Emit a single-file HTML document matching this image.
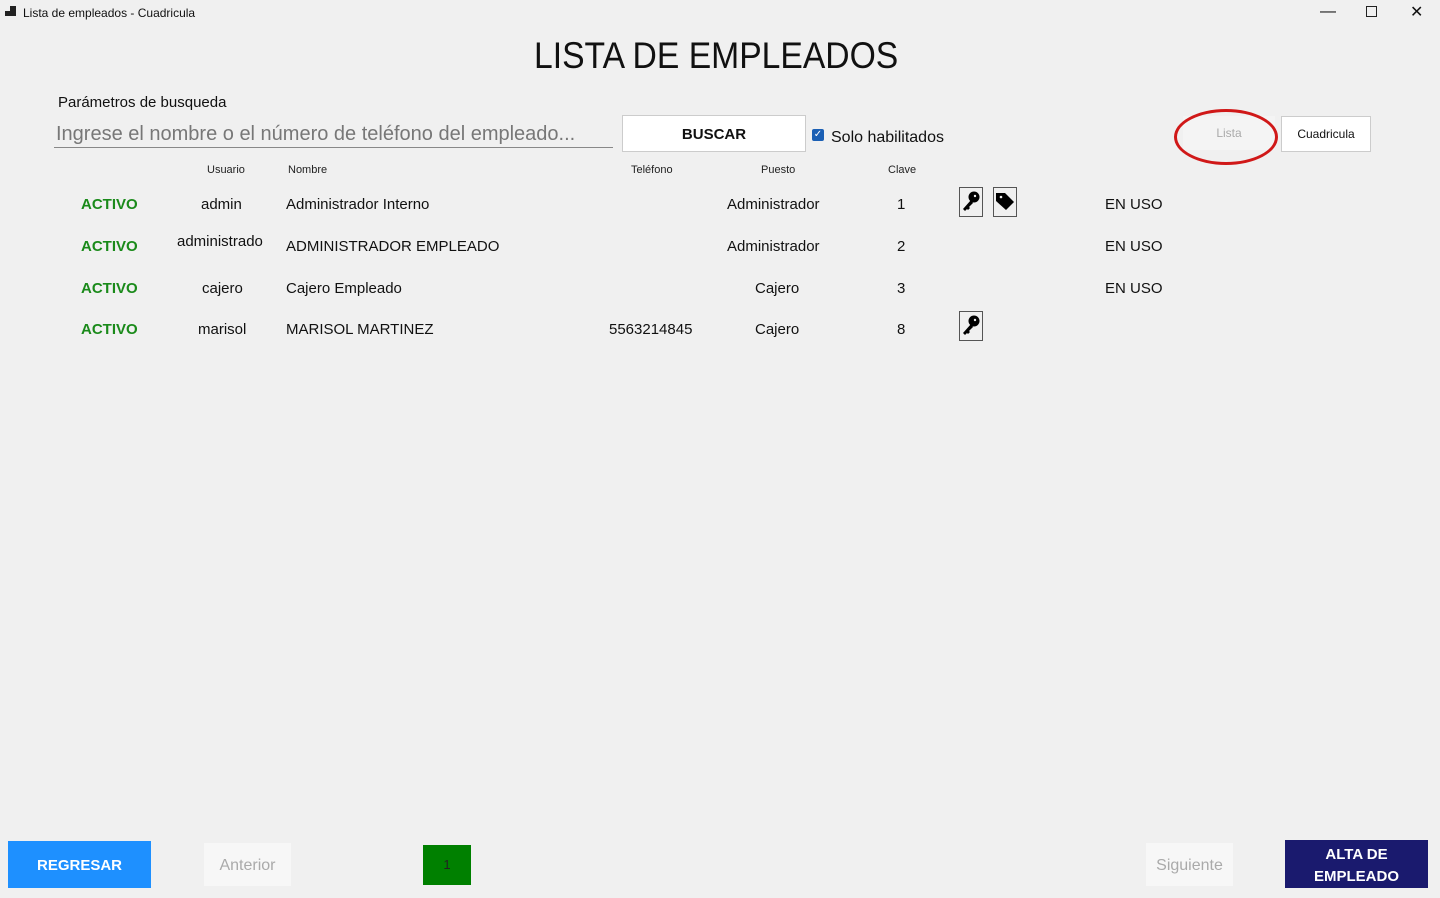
<!DOCTYPE html>
<html><head><meta charset="utf-8"><style>
body{margin:0;width:1440px;height:898px;background:#f0f0f0;font-family:"Liberation Sans",sans-serif;position:relative;overflow:hidden;color:#111}
.a{position:absolute;white-space:nowrap}
.h{font-size:11px;color:#222}
.r{font-size:15px}
.act{color:#1a8a1a;font-weight:bold;font-size:15px}
.ico{position:absolute;width:22px;height:28px;border:1px solid #555;background:#f0f0f0}
</style></head><body>
<svg class="a" style="left:5px;top:6px" width="12" height="12"><rect x="0" y="5" width="5" height="5" fill="#222"/><rect x="5" y="0" width="6" height="10" fill="#222"/></svg>
<div class="a" style="left:23px;top:6px;font-size:12px">Lista de empleados - Cuadricula</div>
<div class="a" style="left:1320px;top:3px;font-size:16px">—</div>
<div class="a" style="left:1366px;top:6px;width:9px;height:9px;border:1px solid #222"></div>
<div class="a" style="left:1410px;top:2px;font-size:16px">✕</div>
<div class="a" style="left:534px;top:35px;font-size:37px;transform:scaleX(0.91);transform-origin:left">LISTA DE EMPLEADOS</div>
<div class="a" style="left:58px;top:94px;font-size:15px">Parámetros de busqueda</div>
<div class="a" style="left:54px;top:117px;width:559px;height:30px;border-bottom:1px solid #888;background:#f0f0f0"></div>
<div class="a" style="left:56px;top:123px;font-size:20px;color:#777">Ingrese el nombre o el número de teléfono del empleado...</div>
<div class="a" style="left:622px;top:115px;width:182px;height:35px;background:#fff;border:1px solid #ccc;text-align:center;line-height:37px;font-weight:bold;font-size:15px">BUSCAR</div>
<div class="a" style="left:812px;top:129px;width:12px;height:12px;background:#1a5fb4;border-radius:2px;color:#fff;font-size:10px;line-height:12px;text-align:center">✓</div>
<div class="a" style="left:831px;top:129px;font-size:16px">Solo habilitados</div>
<div class="a" style="left:1183px;top:116px;width:92px;height:34px;background:#f4f4f4;text-align:center;line-height:34px;font-size:12px;color:#aaa">Lista</div>
<div class="a" style="left:1174px;top:109px;width:98px;height:50px;border:3px solid #d01818;border-radius:50%"></div>
<div class="a" style="left:1281px;top:116px;width:88px;height:34px;background:#fff;border:1px solid #ccc;text-align:center;line-height:34px;font-size:12px">Cuadricula</div>
<div class="a h" style="left:207px;top:164px">Usuario</div>
<div class="a h" style="left:288px;top:164px">Nombre</div>
<div class="a h" style="left:631px;top:164px">Teléfono</div>
<div class="a h" style="left:761px;top:164px">Puesto</div>
<div class="a h" style="left:888px;top:164px">Clave</div>

<div class="a act" style="left:81px;top:196px">ACTIVO</div>
<div class="a r" style="left:201px;top:196px">admin</div>
<div class="a r" style="left:286px;top:196px">Administrador Interno</div>
<div class="a r" style="left:727px;top:196px">Administrador</div>
<div class="a r" style="left:897px;top:196px">1</div>
<div class="a r" style="left:1105px;top:196px">EN USO</div>

<div class="a act" style="left:81px;top:238px">ACTIVO</div>
<div class="a r" style="left:177px;top:233px">administrado</div>
<div class="a r" style="left:286px;top:238px">ADMINISTRADOR EMPLEADO</div>
<div class="a r" style="left:727px;top:238px">Administrador</div>
<div class="a r" style="left:897px;top:238px">2</div>
<div class="a r" style="left:1105px;top:238px">EN USO</div>

<div class="a act" style="left:81px;top:280px">ACTIVO</div>
<div class="a r" style="left:202px;top:280px">cajero</div>
<div class="a r" style="left:286px;top:280px">Cajero Empleado</div>
<div class="a r" style="left:755px;top:280px">Cajero</div>
<div class="a r" style="left:897px;top:280px">3</div>
<div class="a r" style="left:1105px;top:280px">EN USO</div>

<div class="a act" style="left:81px;top:321px">ACTIVO</div>
<div class="a r" style="left:198px;top:321px">marisol</div>
<div class="a r" style="left:286px;top:321px">MARISOL MARTINEZ</div>
<div class="a r" style="left:609px;top:321px">5563214845</div>
<div class="a r" style="left:755px;top:321px">Cajero</div>
<div class="a r" style="left:897px;top:321px">8</div>

<div class="ico" style="left:959px;top:187px"><svg width="22" height="28"><circle cx="14" cy="9" r="5.5" fill="#000"/><circle cx="15" cy="8" r="1.2" fill="#f0f0f0"/><path d="M11 12 L3 21 L5 23 L7 21 L8 22 L10 20 L9 19 L13 15Z" fill="#000"/></svg></div>
<div class="ico" style="left:993px;top:187px"><svg width="22" height="28"><path d="M2 5 L11 5 L20 14 L12 22 L2 13Z" fill="#000"/><circle cx="7" cy="9" r="1.3" fill="#f0f0f0"/></svg></div>
<div class="ico" style="left:959px;top:311px"><svg width="22" height="28"><circle cx="14" cy="9" r="5.5" fill="#000"/><circle cx="15" cy="8" r="1.2" fill="#f0f0f0"/><path d="M11 12 L3 21 L5 23 L7 21 L8 22 L10 20 L9 19 L13 15Z" fill="#000"/></svg></div>

<div class="a" style="left:8px;top:841px;width:143px;height:47px;background:#1e90ff;color:#fff;font-weight:bold;font-size:15px;text-align:center;line-height:49px">REGRESAR</div>
<div class="a" style="left:204px;top:843px;width:87px;height:43px;background:#f7f7f7;color:#aaa;font-size:16px;text-align:center;line-height:45px">Anterior</div>
<div class="a" style="left:423px;top:845px;width:48px;height:40px;background:#008000;color:#222;font-size:13px;text-align:center;line-height:40px">1</div>
<div class="a" style="left:1146px;top:843px;width:87px;height:43px;background:#f7f7f7;color:#aaa;font-size:16px;text-align:center;line-height:45px">Siguiente</div>
<div class="a" style="left:1285px;top:840px;width:143px;height:48px;background:#1a1a6e;color:#fff;font-weight:bold;font-size:15px;text-align:center;line-height:22px;padding-top:4px;box-sizing:border-box;white-space:normal">ALTA DE<br>EMPLEADO</div>
</body></html>
